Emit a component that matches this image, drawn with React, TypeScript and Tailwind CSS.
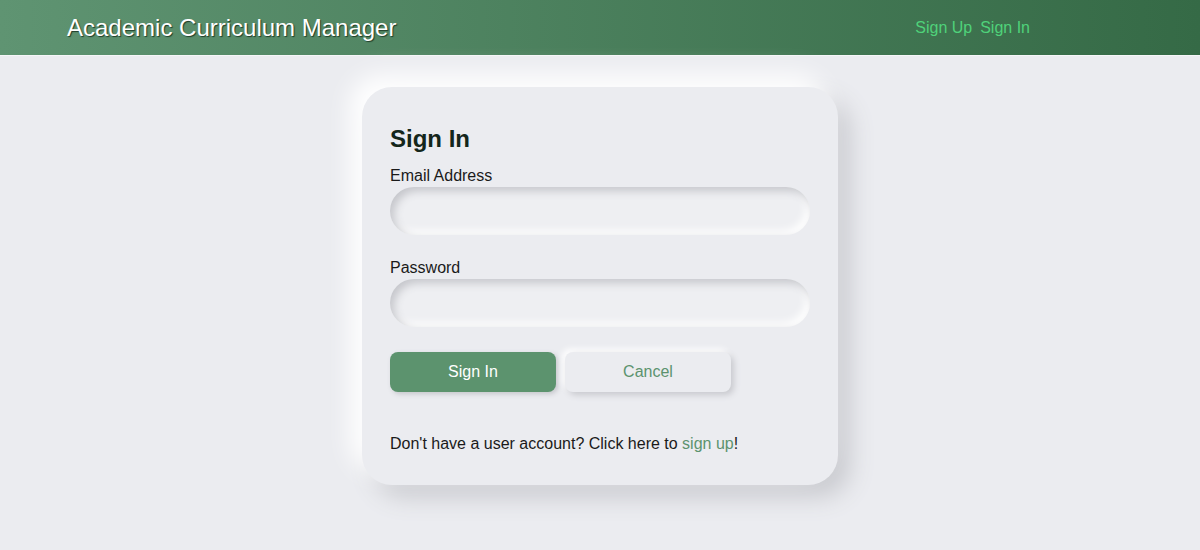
export default function App() {
  return (
    <div
      className="min-h-[550px] bg-[#ebecf0] text-[#1a1a1a]"
      style={{ fontFamily: '"Liberation Sans", Arial, sans-serif' }}
    >
      <header className="box-content flex h-[55px] items-center justify-between border-b border-[#f5f6f8] bg-gradient-to-r from-[#5f9472] to-[#356a46] pl-[67px] pr-[170px]">
        <h1 className="text-[24px] leading-none text-white [text-shadow:1px_1px_1px_#1f3d29]">
          Academic Curriculum Manager
        </h1>
        <nav className="flex gap-[8px] text-[16px] text-[#4fd27a]">
          <a href="#">Sign Up</a>
          <a href="#">Sign In</a>
        </nav>
      </header>

      <main className="flex justify-center pt-[31px]">
        <section className="w-[476px] rounded-[30px] bg-[#ebecf0] px-[28px] pt-[38px] pb-[31px] shadow-[-12px_-12px_24px_#ffffff,12px_12px_24px_#c9cacf]">
          <h2 className="text-[24px] leading-[28px] font-bold text-[#14261b]">Sign In</h2>

          <label className="mt-[13px] block text-[16px] leading-[20px]">Email Address</label>
          <input
            type="email"
            className="mt-[1px] block h-[48px] w-full rounded-[24px] bg-[#eeeff2] px-4 outline-none shadow-[inset_4px_4px_8px_#c5c6cb,inset_-4px_-4px_8px_#ffffff]"
          />

          <label className="mt-[23px] block text-[16px] leading-[20px]">Password</label>
          <input
            type="password"
            className="mt-[1px] block h-[48px] w-full rounded-[24px] bg-[#eeeff2] px-4 outline-none shadow-[inset_4px_4px_8px_#c5c6cb,inset_-4px_-4px_8px_#ffffff]"
          />

          <div className="mt-[25px] flex gap-[9px]">
            <button
              type="button"
              className="h-[40px] w-[166px] rounded-[8px] bg-[#5c936e] text-[16px] text-white shadow-[2px_2px_5px_#c5c6cb]"
            >
              Sign In
            </button>
            <button
              type="button"
              className="h-[40px] w-[166px] rounded-[8px] bg-[#ebecf0] text-[16px] text-[#5c936e] shadow-[3px_3px_6px_#c8c9ce,-3px_-3px_6px_#ffffff]"
            >
              Cancel
            </button>
          </div>

          <p className="mt-[42px] text-[16px] leading-[20px]">
            Don't have a user account? Click here to{' '}
            <a href="#" className="text-[#5c936e]">
              sign up
            </a>
            !
          </p>
        </section>
      </main>
    </div>
  );
}
